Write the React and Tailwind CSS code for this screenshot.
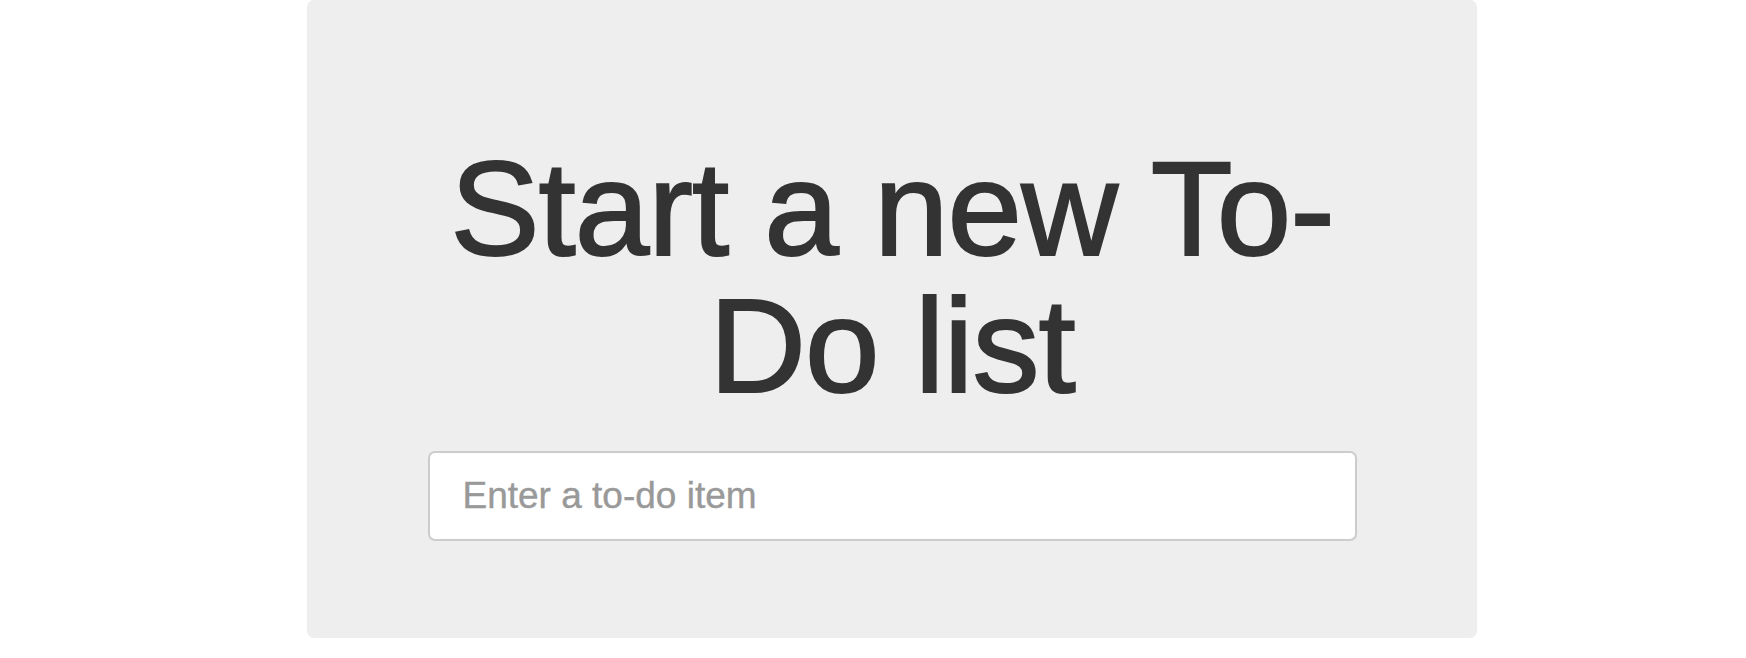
import React, { useState } from "react";

export default function App() {
  const [item, setItem] = useState("");

  return (
    <div className="min-h-screen bg-white font-['Liberation_Sans',Arial,sans-serif]">
      <div className="ml-[307px] w-[1170px] h-[638px] rounded-[7px] bg-[#eeeeee] pt-[140px] pb-[97px] flex flex-col items-center">
        <h1 className="w-[940px] text-center text-[134px] leading-[137px] tracking-[-1px] font-normal text-[#333333] [-webkit-text-stroke:2px_#333333]">
          Start a new To-Do list
        </h1>
        <input
          type="text"
          value={item}
          onChange={(e) => setItem(e.target.value)}
          placeholder="Enter a to-do item"
          className="mt-[37px] w-[929px] h-[90px] rounded-[7px] border-2 border-[#cccccc] bg-white px-[33px] text-[37px] text-[#555555] placeholder:text-[#999999] outline-none [-webkit-text-stroke:0.4px_#999999]"
        />
      </div>
    </div>
  );
}
